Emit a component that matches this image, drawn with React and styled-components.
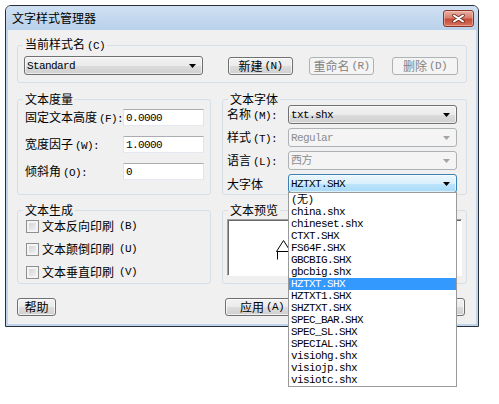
import styled, { createGlobalStyle, css } from "styled-components";

const cjk = `"Noto Sans CJK SC", "Noto Sans CJK JP", sans-serif`;
const mono = `"Liberation Mono", "Noto Sans CJK SC", monospace`;

const fonts = [
  "(无)",
  "china.shx",
  "chineset.shx",
  "CTXT.SHX",
  "FS64F.SHX",
  "GBCBIG.SHX",
  "gbcbig.shx",
  "HZTXT.SHX",
  "HZTXT1.SHX",
  "SHZTXT.SHX",
  "SPEC_BAR.SHX",
  "SPEC_SL.SHX",
  "SPECIAL.SHX",
  "visiohg.shx",
  "visiojp.shx",
  "visiotc.shx",
];

export default function App() {
  return (
    <Page>
      <GlobalStyle />
      <Window>
        <TitleBar>
          <Title>文字样式管理器</Title>
          <CloseButton aria-label="关闭">
            <svg width="13" height="9" viewBox="0 0 13 9">
              <path
                d="M2 1.5 L11 7.5 M11 1.5 L2 7.5"
                stroke="#6b3128"
                strokeWidth="3.6"
                strokeLinecap="round"
              />
              <path
                d="M2 1.5 L11 7.5 M11 1.5 L2 7.5"
                stroke="#fff"
                strokeWidth="2"
                strokeLinecap="round"
              />
            </svg>
          </CloseButton>
        </TitleBar>

        <Client>
          <Group>
            <Legend>
              当前样式名<Key>(C)</Key>
            </Legend>
            <StyleBody>
              <Combo $w={179} text="Standard" />
              <Button $w={65} style={{ marginLeft: 25 }}>
                新建<Key>(N)</Key>
              </Button>
              <Button $w={65} disabled style={{ marginLeft: 16 }}>
                重命名<Key>(R)</Key>
              </Button>
              <Button $w={66} disabled style={{ marginLeft: 18 }}>
                删除<Key>(D)</Key>
              </Button>
            </StyleBody>
          </Group>

          <PanelRow $gap={10}>
            <Group>
              <Legend>文本度量</Legend>
              <MetricBody>
                <FieldLabel>
                  固定文本高度<Key>(F):</Key>
                </FieldLabel>
                <TextBox defaultValue="0.0000" />
                <FieldLabel>
                  宽度因子<Key>(W):</Key>
                </FieldLabel>
                <TextBox defaultValue="1.0000" />
                <FieldLabel>
                  倾斜角<Key>(O):</Key>
                </FieldLabel>
                <TextBox defaultValue="0" />
              </MetricBody>
            </Group>

            <Group>
              <Legend>文本字体</Legend>
              <FontBody>
                <FieldLabel>
                  名称<Key>(M):</Key>
                </FieldLabel>
                <Combo $w={169} text="txt.shx" />
                <FieldLabel>
                  样式<Key>(T):</Key>
                </FieldLabel>
                <Combo $w={169} text="Regular" state="disabled" />
                <FieldLabel>
                  语言<Key>(L):</Key>
                </FieldLabel>
                <Combo $w={169} text="西方" state="disabled" />
                <FieldLabel>大字体</FieldLabel>
                <Combo $w={169} text="HZTXT.SHX" state="open">
                  <DropList>
                    {fonts.map((f) => (
                      <DropItem key={f} $selected={f === "HZTXT.SHX"}>
                        {f}
                      </DropItem>
                    ))}
                  </DropList>
                </Combo>
              </FontBody>
            </Group>
          </PanelRow>

          <PanelRow $gap={9}>
            <Group>
              <Legend>文本生成</Legend>
              <CheckBody>
                <CheckRow>
                  <CheckBox />
                  文本反向印刷<Key>(B)</Key>
                </CheckRow>
                <CheckRow>
                  <CheckBox />
                  文本颠倒印刷<Key>(U)</Key>
                </CheckRow>
                <CheckRow>
                  <CheckBox />
                  文本垂直印刷<Key>(V)</Key>
                </CheckRow>
              </CheckBody>
            </Group>

            <Group>
              <Legend>文本预览</Legend>
              <PreviewBody>
                <PreviewBox>
                  <svg width="100%" height="100%">
                    <path
                      d="M48.5 31.5 L55.5 20.5 L62.5 31.5 M48.5 31.5 L70.5 31.5 M49.5 31.5 L49.5 39.5"
                      stroke="#000"
                      strokeWidth="1"
                      fill="none"
                    />
                  </svg>
                </PreviewBox>
              </PreviewBody>
            </Group>
          </PanelRow>

          <PanelRow $gap={14}>
            <div>
              <Button $w={39}>帮助</Button>
            </div>
            <ActionBar>
              <Button $w={74}>
                应用<Key>(A)</Key>
              </Button>
              <Button $w={74}>取消</Button>
              <Button $w={74}>
                关闭<Key>(C)</Key>
              </Button>
            </ActionBar>
          </PanelRow>
        </Client>
      </Window>
    </Page>
  );
}

function Combo({ $w, text, state = "normal", children }) {
  return (
    <ComboBox $w={$w} $state={state}>
      <ComboText>{text}</ComboText>
      <svg width="7" height="4" viewBox="0 0 7 4">
        <polygon
          points="0,0 7,0 3.5,4"
          fill={state === "disabled" ? "#a3a3a3" : "#000"}
        />
      </svg>
      {children}
    </ComboBox>
  );
}

const GlobalStyle = createGlobalStyle`
  * { box-sizing: border-box; }
  html, body, #root { overflow: visible; }
  body {
    margin: 0;
    background: #fff;
    font-family: ${cjk};
    font-size: 12px;
    color: #000;
  }
`;

const Page = styled.div`
  min-height: 404px;
  padding: 5px 0 0 5px;
  background: #fff;
`;

const Window = styled.div`
  width: 474px;
  height: 322px;
  display: flex;
  flex-direction: column;
  padding: 0 2px 2px;
  border: 1px solid #2b3038;
  border-radius: 6px 6px 0 0;
  background: #bed5ec;
`;

const TitleBar = styled.div`
  height: 24px;
  margin: 0 -2px;
  padding: 0 4px 0 6px;
  display: flex;
  align-items: center;
  justify-content: space-between;
  border-radius: 5px 5px 0 0;
  background: linear-gradient(#cfe0f2, #b9d1ea);
`;

const Title = styled.span`
  font-size: 12px;
  line-height: 14px;
  color: #000;
`;

const CloseButton = styled.button`
  width: 31px;
  height: 17px;
  padding: 0;
  display: flex;
  align-items: center;
  justify-content: center;
  border: 1px solid #8a3428;
  border-radius: 3px;
  background: linear-gradient(#eab0a4 0%, #d9806f 45%, #c64a36 55%, #d8735f 100%);
  box-shadow: inset 0 0 0 1px rgba(255, 220, 210, 0.45);
`;

const Client = styled.div`
  flex: 1;
  padding: 8px 9px 0;
  background: #f0f0f0;
`;

const Group = styled.fieldset`
  margin: 0;
  padding: 0;
  min-width: 0;
  border: 1px solid #d5dfe5;
  border-radius: 3px;
`;

const Legend = styled.legend`
  margin-left: 5px;
  padding: 0 2px;
  font-size: 12px;
  line-height: 12px;
`;

const Key = styled.span`
  margin-left: 2px;
  font-family: ${mono};
  font-size: 11px;
  letter-spacing: -0.6px;
`;

const StyleBody = styled.div`
  display: flex;
  align-items: center;
  padding: 4px 8px 7px 6px;
`;

const PanelRow = styled.div`
  display: grid;
  grid-template-columns: 194px 245px;
  column-gap: 11px;
  margin-top: ${(p) => p.$gap}px;
`;

const MetricBody = styled.div`
  display: grid;
  grid-template-columns: 1fr 81px;
  row-gap: 10px;
  align-items: center;
  padding: 4px 7px 0 7px;
`;

const FontBody = styled.div`
  display: grid;
  grid-template-columns: 61px 169px;
  row-gap: 4px;
  align-items: center;
  padding: 0 9px 1px 4px;
`;

const FieldLabel = styled.span`
  font-size: 12px;
  line-height: 14px;
  white-space: nowrap;
`;

const TextBox = styled.input`
  width: 81px;
  height: 17px;
  padding: 0 2px;
  border: 1px solid;
  border-color: #abadb3 #e2e3ea #e3e9ef #e2e3ea;
  background: #fff;
  font-family: ${mono};
  font-size: 11px;
  letter-spacing: -0.6px;
  color: #000;
  outline: none;
`;

const ComboBox = styled.div`
  position: relative;
  width: ${(p) => p.$w}px;
  height: 19px;
  display: flex;
  align-items: center;
  justify-content: space-between;
  padding: 0 6px 0 2px;
  border: 1px solid #707070;
  border-radius: 3px;
  background: linear-gradient(#f2f2f2 0%, #ebebeb 50%, #dddddd 51%, #cfcfcf 100%);
  box-shadow: inset 0 0 0 1px rgba(255, 255, 255, 0.6);
  font-family: ${mono};
  font-size: 11px;
  letter-spacing: -0.6px;
  color: #000;

  ${(p) =>
    p.$state === "disabled" &&
    css`
      border-color: #adb2b5;
      background: #f4f4f4;
      box-shadow: none;
      color: #8d8d8d;
    `}

  ${(p) =>
    p.$state === "open" &&
    css`
      border-color: #3c7fb1;
      background: linear-gradient(#eaf6fd 0%, #d9f0fc 50%, #bee6fd 51%, #a7d9f5 100%);
    `}
`;

const ComboText = styled.span`
  line-height: 14px;
  white-space: nowrap;
`;

const DropList = styled.ul`
  position: absolute;
  top: 100%;
  left: -1px;
  right: -1px;
  z-index: 10;
  margin: 0;
  padding: 1px 0 0;
  list-style: none;
  border: 1px solid #9a9a9a;
  background: #fff;
`;

const DropItem = styled.li`
  height: 12px;
  padding-left: 2px;
  font-family: ${mono};
  font-size: 11px;
  line-height: 12px;
  letter-spacing: -0.6px;
  white-space: nowrap;
  color: #000;

  ${(p) =>
    p.$selected &&
    css`
      background: #3399ff;
      color: #fff;
    `}
`;

const CheckBody = styled.div`
  display: flex;
  flex-direction: column;
  gap: 7px;
  padding: 2px 0 3px 8px;
`;

const CheckRow = styled.label`
  height: 16px;
  display: flex;
  align-items: center;
  gap: 3px;
  font-size: 12px;
  line-height: 14px;
`;

const CheckBox = styled.span`
  width: 13px;
  height: 13px;
  flex-shrink: 0;
  border: 1px solid #8e8f8f;
  background: linear-gradient(135deg, #cbcdd1 0%, #e6e7e9 60%, #f6f6f6 100%);
  box-shadow: inset 0 0 0 2px #f4f4f4;
`;

const PreviewBody = styled.div`
  padding: 3px 4px 0;
`;

const PreviewBox = styled.div`
  height: 57px;
  border: 1px solid;
  border-color: #a0a0a0 #ffffff #ffffff #a0a0a0;
  box-shadow: inset 1px 1px 0 #696969;
  background: #fff;
`;

const ActionBar = styled.div`
  display: flex;
  gap: 9px;
  padding-left: 3px;
`;

const Button = styled.button`
  width: ${(p) => p.$w}px;
  height: 18px;
  padding: 0;
  display: flex;
  align-items: center;
  justify-content: center;
  border: 1px solid #707070;
  border-radius: 3px;
  background: linear-gradient(#f2f2f2 0%, #ebebeb 50%, #dddddd 51%, #cfcfcf 100%);
  box-shadow: inset 0 0 0 1px rgba(255, 255, 255, 0.7);
  font-family: ${cjk};
  font-size: 12px;
  line-height: 14px;
  color: #000;
  white-space: nowrap;

  &:disabled {
    border-color: #adb2b5;
    background: #f4f4f4;
    box-shadow: none;
    color: #838383;
  }
`;
